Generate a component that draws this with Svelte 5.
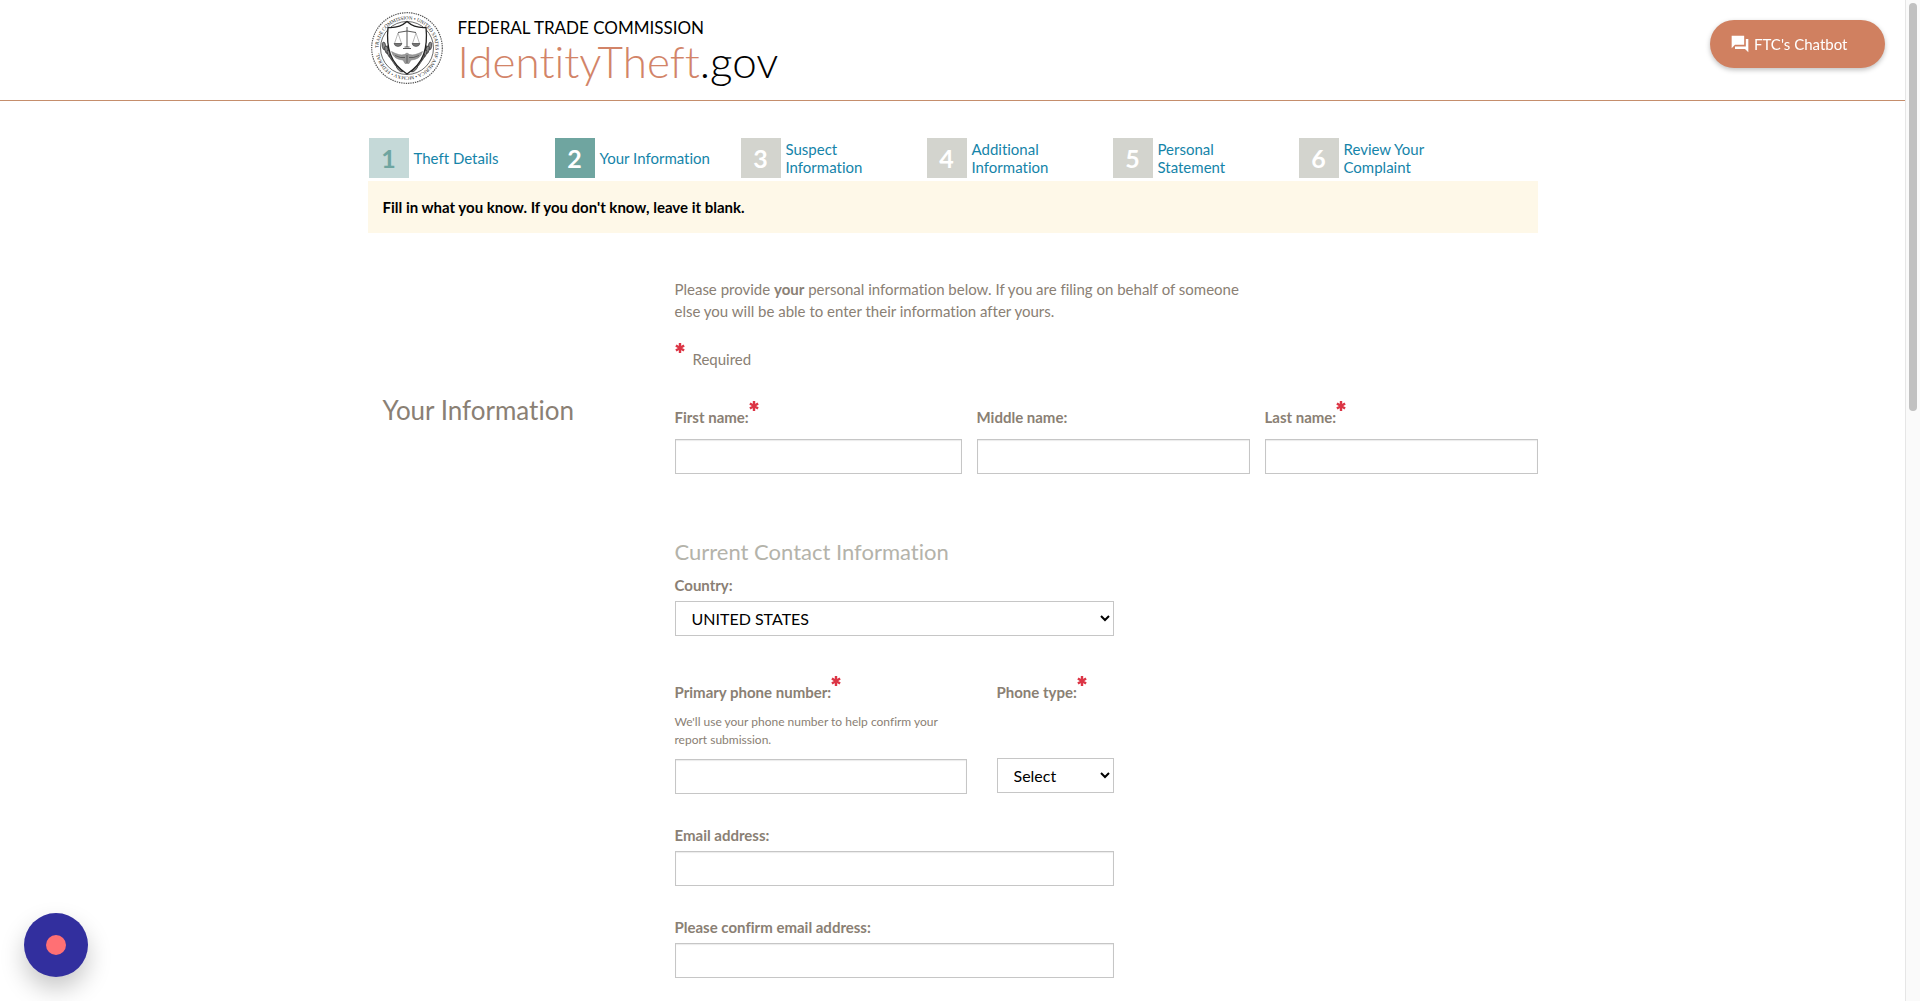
<script lang="ts">
	interface Step {
		label: string;
		state: 'done' | 'current' | 'todo';
	}

	const steps: Step[] = [
		{ label: 'Theft Details', state: 'done' },
		{ label: 'Your Information', state: 'current' },
		{ label: 'Suspect Information', state: 'todo' },
		{ label: 'Additional Information', state: 'todo' },
		{ label: 'Personal Statement', state: 'todo' },
		{ label: 'Review Your Complaint', state: 'todo' }
	];

	const leaves = [0, 1, 2, 3, 4, 5, 6];

	let firstName = $state('');
	let middleName = $state('');
	let lastName = $state('');
	let country = $state('US');
	let phone = $state('');
	let phoneType = $state('');
	let email = $state('');
	let emailConfirm = $state('');
</script>

{#snippet star()}
	<svg class="star" viewBox="0 0 10 10" role="img" aria-label="required">
		<path d="M5 0v10M.9 2.4l8.2 5.2M9.1 2.4L.9 7.6" />
	</svg>
{/snippet}

<div class="page">
	<header class="header">
		<a class="brand" href="/">
			<svg class="seal" viewBox="0 0 72 72" aria-hidden="true">
				<defs>
					<path id="ring" d="M36 36m-28.5 0a28.5 28.5 0 1 1 57 0a28.5 28.5 0 1 1 -57 0" />
				</defs>
				<circle cx="36" cy="36" r="35.3" fill="none" stroke="#555" stroke-width="1.2" stroke-dasharray="1.4 .9" />
				<text class="seal-text">
					<textPath href="#ring">TRADE COMMISSION • UNITED STATES OF AMERICA • MCMXV • FEDERAL</textPath>
				</text>
				<circle cx="36" cy="36" r="26.5" fill="#fff" stroke="#444" stroke-width=".8" />
				{#each leaves as i}
					<g fill="#888" stroke="#222" stroke-width=".6">
						<ellipse cx={13 + i * 2.6} cy={34 + i * 3.8} rx="1.7" ry="4" transform="rotate({-8 - i * 6} {13 + i * 2.6} {34 + i * 3.8})" />
						<ellipse cx={17 + i * 2.4} cy={36 + i * 3.4} rx="1.5" ry="3.6" transform="rotate({28 - i * 6} {17 + i * 2.4} {36 + i * 3.4})" />
						<ellipse cx={59 - i * 2.6} cy={34 + i * 3.8} rx="1.7" ry="4" transform="rotate({8 + i * 6} {59 - i * 2.6} {34 + i * 3.8})" />
						<ellipse cx={55 - i * 2.4} cy={36 + i * 3.4} rx="1.5" ry="3.6" transform="rotate({i * 6 - 28} {55 - i * 2.4} {36 + i * 3.4})" />
					</g>
				{/each}
				<path d="M36 9.5c-5 4.500-12 6.500-19 6c-2 20 2 36 19 46.500c17-10.500 21-26.500 19-46.500c-7 .5-14-1.500-19-6z" fill="#fff" stroke="#222" stroke-width="1.300" />
				<path d="M36 15v20M27 20.500q9-3 18 0M32 36.500h8M33.500 35h5" fill="none" stroke="#444" stroke-width=".9" />
				<path d="M27 21l-3.500 10.500h7zM45 21l-3.500 10.500h7z" fill="none" stroke="#777" stroke-width=".5" />
				<path d="M23 31.500h8q-.8 3-4 3t-4-3zM41 31.500h8q-.8 3-4 3t-4-3z" fill="#777" stroke="#333" stroke-width=".5" />
				<path d="M20.500 39.500q8 4.500 13 3l2.500-1.500l2.500 1.500q5 1.500 13-3q-2 8-11.500 8.500l-2 3.500h-4l-2-3.500q-9.500-.5-11.500-8.500z" fill="#999" stroke="#777" stroke-width=".5" />
				<path d="M24 43.500q6 3 10 2M48 43.500q-6 3-10 2M36 43v8" fill="none" stroke="#333" stroke-width=".6" />
			</svg>
			<span class="brand-text">
				<span class="agency">FEDERAL TRADE COMMISSION</span>
				<span class="site"><span class="site-name">IdentityTheft</span>.gov</span>
			</span>
		</a>
	</header>

	<main class="container">
		<nav aria-label="Progress">
			<ol class="steps">
				{#each steps as step, i}
					<li>
						<a class="step" href="#step-{i + 1}" aria-current={step.state === 'current' ? 'step' : undefined}>
							<span class="number {step.state}">{i + 1}</span>
							<span class="step-label">{step.label}</span>
						</a>
					</li>
				{/each}
			</ol>
		</nav>

		<p class="banner">Fill in what you know. If you don't know, leave it blank.</p>

		<form class="form">
			<div class="intro">
				<p class="intro-text">
					Please provide <strong>your</strong> personal information below. If you are filing on behalf of someone
					else you will be able to enter their information after yours.
				</p>
				<p class="required">{@render star()}Required</p>
			</div>

			<h1>Your Information</h1>

			<div class="fields">
				<div class="names">
					<div class="field spaced">
						<label for="first-name">First name:{@render star()}</label>
						<input id="first-name" type="text" bind:value={firstName} required />
					</div>
					<div class="field spaced">
						<label for="middle-name">Middle name:</label>
						<input id="middle-name" type="text" bind:value={middleName} />
					</div>
					<div class="field spaced">
						<label for="last-name">Last name:{@render star()}</label>
						<input id="last-name" type="text" bind:value={lastName} required />
					</div>
				</div>

				<div class="contact">
					<h2>Current Contact Information</h2>
					<div class="field">
						<label for="country">Country:</label>
						<select id="country" bind:value={country}>
							<option value="US">UNITED STATES</option>
							<option value="CA">CANADA</option>
							<option value="MX">MEXICO</option>
						</select>
					</div>

					<div class="phones">
						<div class="field phone">
							<label for="phone">Primary phone number:{@render star()}</label>
							<p class="help" id="phone-help">We'll use your phone number to help confirm your report submission.</p>
							<input id="phone" type="tel" bind:value={phone} aria-describedby="phone-help" required />
						</div>
						<div class="field phone-type">
							<label for="phone-type">Phone type:{@render star()}</label>
							<select id="phone-type" bind:value={phoneType} required>
								<option value="">Select</option>
								<option value="home">Home</option>
								<option value="mobile">Mobile</option>
								<option value="work">Work</option>
							</select>
						</div>
					</div>

					<div class="field email">
						<label for="email">Email address:</label>
						<input id="email" type="email" bind:value={email} />
					</div>
					<div class="field email">
						<label for="email-confirm">Please confirm email address:</label>
						<input id="email-confirm" type="email" bind:value={emailConfirm} />
					</div>
				</div>
			</div>
		</form>
	</main>
</div>

<button type="button" class="chatbot">
	<svg viewBox="0 0 24 24" aria-hidden="true">
		<path d="M21 6h-2v9H6v3h12l4 4V6zM17 13V2H2v15l4-4z" />
	</svg>
	FTC's Chatbot
</button>

<button type="button" class="recorder" aria-label="Record"><span></span></button>

<div class="scrollbar" aria-hidden="true"><div class="thumb"></div></div>

<style>
	:global(body) {
		background-color: #fff;
		font-family: Lato, 'Liberation Sans', sans-serif;
		font-size: 15px;
		font-variant-ligatures: none;
		line-height: 22px;
		color: #8a8074;
	}

	.page {
		padding-right: 15px;
	}

	p,
	h1,
	h2 {
		margin: 0;
		font-weight: 400;
	}

	.header {
		padding: 12px 0 16px;
		border-bottom: 1px solid #c58e6c;
	}

	.brand {
		display: flex;
		gap: 15px;
		max-width: 1164px;
		margin: 0 auto;
		color: #000;
		text-decoration: none;
	}

	.seal {
		width: 72px;
		height: 72px;
	}

	.seal-text {
		font-family: 'Liberation Serif', serif;
		font-size: 5px;
		fill: #222;
	}

	.brand-text {
		display: flex;
		flex-direction: column;
		padding-top: 5px;
	}

	.agency {
		font-size: 17px;
		line-height: 21px;
	}

	.site {
		font-size: 44px;
		line-height: 46px;
		font-weight: 300;
	}

	.site-name {
		color: #d28468;
	}

	.container {
		max-width: 1170px;
		margin: 0 auto;
		padding: 37px 0 20px;
	}

	.steps {
		display: grid;
		grid-template-columns: repeat(6, 1fr);
		max-width: 1116px;
		margin: 0;
		padding: 0 1px;
		list-style: none;
	}

	.step {
		display: flex;
		align-items: center;
		gap: 5px;
		height: 40px;
		color: #1584a9;
		line-height: 18px;
		text-decoration: none;
	}

	.step-label {
		max-width: 120px;
	}

	.number {
		flex: none;
		width: 40px;
		font-size: 25px;
		line-height: 40px;
		font-weight: 700;
		text-align: center;
		color: #fff;
		background-color: #d3d4ce;
	}

	.number.done {
		color: #6fa5a0;
		background-color: #c5d9d8;
	}

	.number.current {
		background-color: #6fa5a0;
	}

	.banner {
		margin-top: 3px;
		padding: 15px;
		background-color: #fef8e8;
		color: #000;
		font-weight: 700;
	}

	.form {
		display: grid;
		grid-template-columns: 307px minmax(0, 1fr);
		margin-top: 45px;
	}

	.intro {
		grid-column: 2;
		max-width: 580px;
	}

	.required {
		display: flex;
		gap: 8px;
		margin: 26px 0 25px;
	}

	.star {
		flex: none;
		width: 10px;
		height: 10px;
		margin-top: -5px;
		fill: none;
		stroke: #dc3545;
		stroke-width: 2.4;
	}

	h1 {
		padding-left: 15px;
		font-size: 26px;
		line-height: 30px;
	}

	.fields {
		padding-top: 11px;
	}

	.names {
		display: grid;
		grid-template-columns: 287fr 273fr 273fr;
		gap: 15px;
	}

	.field {
		display: flex;
		flex-direction: column;
		gap: 5px;
	}

	.field.spaced {
		gap: 11px;
	}

	label {
		display: flex;
		font-weight: 700;
	}

	input,
	select {
		box-sizing: border-box;
		width: 100%;
		height: 35px;
		padding: 0 12px;
		border: 1px solid #c6c6c6;
		border-radius: 0;
		background-color: #fff;
		color: #000;
		font-family: inherit;
		font-size: 16px;
	}

	input {
		box-shadow: inset 0 1px 1px rgb(0 0 0 / 0.08);
	}

	select {
		padding: 0 0 0 12px;
	}

	.contact {
		max-width: 439px;
		margin-top: 64px;
	}

	h2 {
		margin-bottom: 8px;
		font-size: 22px;
		line-height: 28px;
		color: #b4b3aa;
	}

	.phones {
		display: grid;
		grid-template-columns: minmax(0, 1fr) 117px;
		gap: 30px;
		margin-top: 45px;
	}

	.help {
		font-size: 12px;
		line-height: 18px;
	}

	.phone {
		gap: 10px;
	}

	.phone-type {
		gap: 55px;
	}

	.email {
		margin-top: 30px;
	}

	.chatbot {
		position: fixed;
		top: 20px;
		right: 35px;
		display: flex;
		align-items: center;
		gap: 4px;
		width: 175px;
		height: 48px;
		padding: 0 20px;
		border: none;
		border-radius: 24px;
		background-color: #d08060;
		box-shadow: 0 2px 5px rgb(0 0 0 / 0.25);
		color: #fff;
		font-family: inherit;
		font-size: 15px;
	}

	.chatbot svg {
		width: 20px;
		height: 20px;
		fill: #fff;
	}

	.recorder {
		position: fixed;
		left: 24px;
		bottom: 24px;
		display: flex;
		align-items: center;
		justify-content: center;
		width: 64px;
		height: 64px;
		border: none;
		border-radius: 50%;
		background-color: #322f9e;
		box-shadow: 0 12px 24px rgb(0 0 0 / 0.22);
	}

	.recorder span {
		width: 20px;
		height: 20px;
		border-radius: 50%;
		background-color: #ff7074;
	}

	.scrollbar {
		position: fixed;
		top: 0;
		right: 0;
		bottom: 0;
		box-sizing: border-box;
		width: 15px;
		padding: 3px;
		border-left: 1px solid #e6e6e6;
		background-color: #fafafa;
	}

	.thumb {
		width: 8px;
		height: 41%;
		border-radius: 4px;
		background-color: #c1c1c1;
	}
</style>
